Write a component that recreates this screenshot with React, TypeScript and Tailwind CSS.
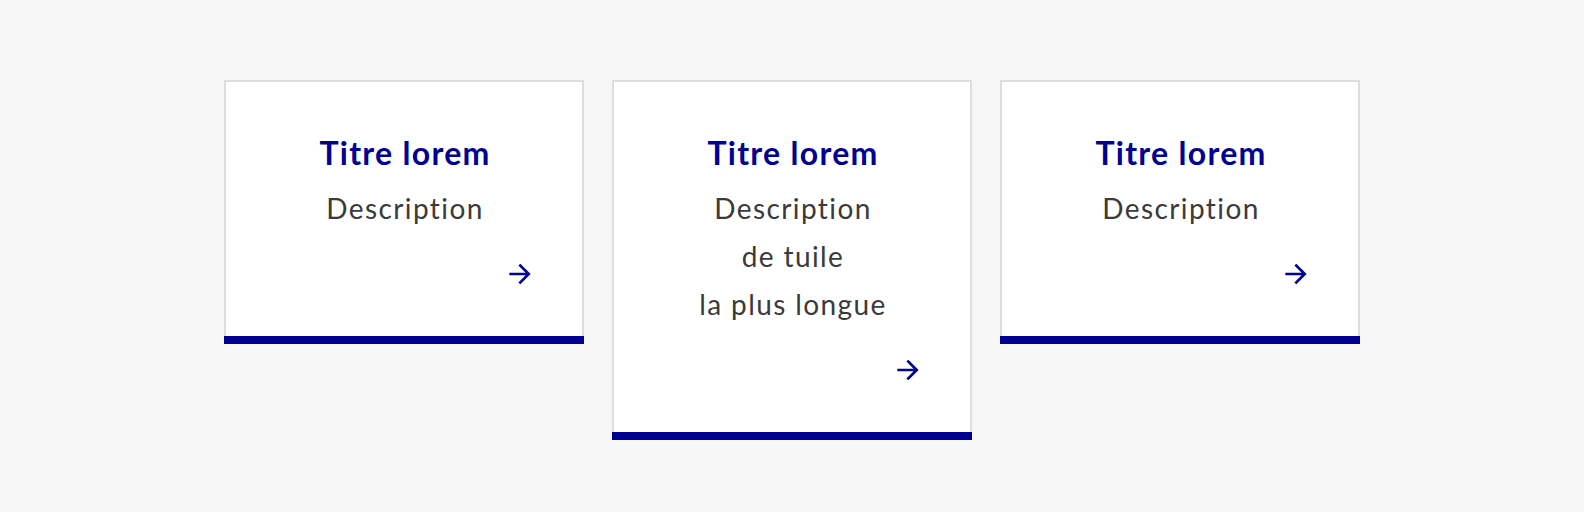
const tiles = [
    { title: 'Titre lorem', desc: ['Description'] },
    { title: 'Titre lorem', desc: ['Description', 'de tuile', 'la plus longue'] },
    { title: 'Titre lorem', desc: ['Description'] },
];

const ArrowRight = () => (
    <svg viewBox="0 0 24 24" width={32} height={32} fill="#000091" aria-hidden="true">
        <path d="M16.172 11l-5.364-5.364 1.414-1.414L20 12l-7.778 7.778-1.414-1.414L16.172 13H4v-2z" />
    </svg>
);

const Tile = ({ title, desc }: { title: string; desc: string[] }) => (
    <a href="#" className="flex w-[360px] flex-col">
        <div className="flex flex-col border-2 border-b-0 border-[#dddddd] bg-white pl-12 pr-[46px] pt-[47px] pb-[46px]">
            <h3 className="text-center text-[32px] font-bold leading-[48px] tracking-[0.04em] text-[#000091]">
                {title}
            </h3>
            <p className="mt-[7px] text-center text-[28px] leading-[48px] tracking-[0.05em] text-[#3a3a3a] [font-variant-ligatures:none]">
                {desc.map((line, i) => (
                    <span key={i} className="block">
                        {line}
                    </span>
                ))}
            </p>
            <div className="mt-[26px] flex justify-end">
                <ArrowRight />
            </div>
        </div>
        <div className="h-2 bg-[#000091]" />
    </a>
);

export default function App() {
    return (
        <div
            className="flex h-[512px] w-full items-start justify-center gap-7 bg-[#f6f6f6] pt-20"
            style={{ fontFamily: 'Lato, "Noto Sans", sans-serif' }}
        >
            {tiles.map((t, i) => (
                <Tile key={i} title={t.title} desc={t.desc} />
            ))}
        </div>
    );
}
